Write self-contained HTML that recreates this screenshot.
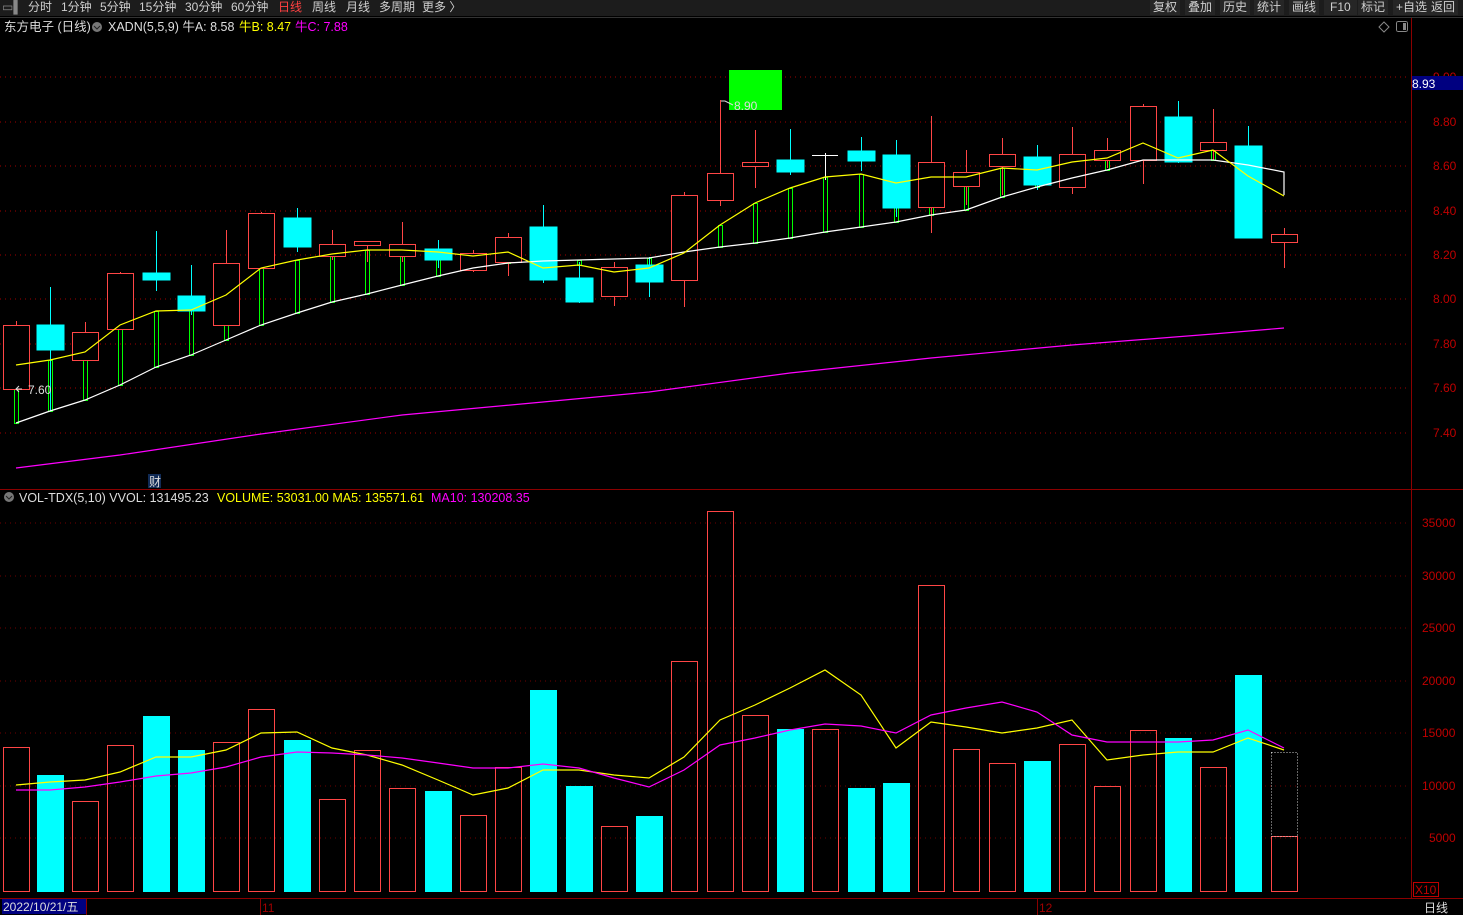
<!DOCTYPE html>
<html><head><meta charset="utf-8"><style>
html,body{margin:0;padding:0;background:#000;width:1463px;height:915px;overflow:hidden;font-family:"Liberation Sans","Noto Sans CJK SC",sans-serif}
.top{position:absolute;left:0;top:0;width:1463px;height:16px;background:#1c1c1c;font-size:12px;color:#cfcfcf;line-height:15px}
.top span{position:absolute;top:0}
.btn{background:#262626;padding:0 3px}
svg rect, svg line{shape-rendering:crispEdges}
</style></head><body>
<div class="top">
<span style="left:2px;color:#888">▭▌</span>
<span style="left:28px">分时</span><span style="left:61px">1分钟</span><span style="left:100px">5分钟</span><span style="left:139px">15分钟</span><span style="left:185px">30分钟</span><span style="left:231px">60分钟</span><span style="left:278px;color:#ff4040">日线</span><span style="left:312px">周线</span><span style="left:346px">月线</span><span style="left:379px">多周期</span><span style="left:422px">更多 〉</span>
<span class="btn" style="left:1150px">复权</span><span class="btn" style="left:1185px">叠加</span><span class="btn" style="left:1220px">历史</span><span class="btn" style="left:1254px">统计</span><span class="btn" style="left:1289px">画线</span><span class="btn" style="left:1324px;padding:0 6px">F10</span><span class="btn" style="left:1358px">标记</span><span class="btn" style="left:1393px">+自选</span><span class="btn" style="left:1428px">返回</span>
</div>
<svg width="1463" height="915" style="position:absolute;left:0;top:0" xmlns="http://www.w3.org/2000/svg">
<g font-family="Liberation Sans, Noto Sans CJK SC, sans-serif" font-size="12">
<line x1="0" y1="17.5" x2="1463" y2="17.5" stroke="#333"/>
<text x="4" y="31" fill="#ddd" font-size="12.5">东方电子 (日线)</text>
<circle cx="97" cy="27" r="5" fill="#777"/><path d="M94 26l3 3 3-3" stroke="#222" fill="none"/>
<text x="108" y="31" fill="#ddd" font-size="12.5">XADN(5,5,9)  牛A: 8.58</text>
<text x="239" y="31" fill="#ffff00" font-size="12.5">牛B: 8.47</text>
<text x="295" y="31" fill="#ff00ff" font-size="12.5">牛C: 7.88</text>
<path d="M1384 22l5 5-5 5-5-5z" stroke="#888" fill="none"/>
<rect x="1396.5" y="21.5" width="11" height="10" rx="2" stroke="#888" fill="none"/><rect x="1403" y="23" width="3" height="7" fill="#888"/>
<g stroke="#a00000" stroke-dasharray="1,4">
<line x1="0" y1="77" x2="1410" y2="77"/><line x1="0" y1="122" x2="1410" y2="122"/><line x1="0" y1="166" x2="1410" y2="166"/><line x1="0" y1="211" x2="1410" y2="211"/><line x1="0" y1="255" x2="1410" y2="255"/><line x1="0" y1="299" x2="1410" y2="299"/><line x1="0" y1="344" x2="1410" y2="344"/><line x1="0" y1="388" x2="1410" y2="388"/><line x1="0" y1="433" x2="1410" y2="433"/>
</g>
<g fill="#c00000" font-size="12">
<text x="1433" y="81">9.00</text><text x="1433" y="126">8.80</text><text x="1433" y="170">8.60</text><text x="1433" y="215">8.40</text><text x="1433" y="259">8.20</text><text x="1433" y="303">8.00</text><text x="1433" y="348">7.80</text><text x="1433" y="392">7.60</text><text x="1433" y="437">7.40</text>
</g>
<rect x="1411" y="76" width="52" height="14" fill="#000080"/>
<text x="1412" y="88" fill="#fff">8.93</text>
<line x1="1411.5" y1="18" x2="1411.5" y2="898" stroke="#8b0000"/>
<line x1="0" y1="489.5" x2="1463" y2="489.5" stroke="#8b0000"/>
<line x1="0" y1="898.5" x2="1463" y2="898.5" stroke="#8b0000"/>
<polyline fill="none" stroke="#ff00ff" stroke-width="1.2" points="16,468 120,455 261,434 402,415 543,402 649,392 790,373 931,358 1072,345 1213,334 1284,328"/>
<g fill="none" stroke="#00ff00" stroke-width="1">
<rect x="14.5" y="365.5" width="4" height="58"/><rect x="48.5" y="360.5" width="4" height="51"/><rect x="83.5" y="352.5" width="4" height="48"/><rect x="118.5" y="325.5" width="4" height="60"/><rect x="154.5" y="311.5" width="4" height="56"/><rect x="189.5" y="310.5" width="4" height="45"/><rect x="224.5" y="295.5" width="4" height="45"/><rect x="259.5" y="268.5" width="4" height="57"/><rect x="295.5" y="260.5" width="4" height="53"/><rect x="330.5" y="254.5" width="4" height="48"/><rect x="365.5" y="250.5" width="4" height="44"/><rect x="400.5" y="250.5" width="4" height="35"/><rect x="436.5" y="252.5" width="4" height="24"/><rect x="471.5" y="256.5" width="4" height="12"/><rect x="506.5" y="252.5" width="4" height="11"/><rect x="577.5" y="260.5" width="4" height="5"/><rect x="647.5" y="258.5" width="4" height="10"/><rect x="718.5" y="225.5" width="4" height="22"/><rect x="753.5" y="203.5" width="4" height="40"/><rect x="788.5" y="188.5" width="4" height="50"/><rect x="823.5" y="177.5" width="4" height="55"/><rect x="859.5" y="174.5" width="4" height="53"/><rect x="894.5" y="183.5" width="4" height="39"/><rect x="929.5" y="177.5" width="4" height="38"/><rect x="964.5" y="177.5" width="4" height="33"/><rect x="1000.5" y="168.5" width="4" height="29"/><rect x="1035.5" y="170.5" width="4" height="17"/><rect x="1070.5" y="162.5" width="4" height="16"/><rect x="1105.5" y="158.5" width="4" height="12"/><rect x="1141.5" y="143.5" width="4" height="17"/><rect x="1211.5" y="150.5" width="4" height="10"/>
</g>
<g stroke-width="1">
<g stroke="#ff4646" fill="#000">
<line x1="16.5" y1="321" x2="16.5" y2="389"/><rect x="3.5" y="325.5" width="26" height="64"/>
<line x1="85.5" y1="322" x2="85.5" y2="360"/><rect x="72.5" y="332.5" width="26" height="28"/>
<line x1="120.5" y1="272" x2="120.5" y2="329"/><rect x="107.5" y="273.5" width="26" height="56"/>
<line x1="226.5" y1="230" x2="226.5" y2="325"/><rect x="213.5" y="263.5" width="26" height="62"/>
<line x1="261.5" y1="212" x2="261.5" y2="268"/><rect x="248.5" y="213.5" width="26" height="55"/>
<line x1="332.5" y1="230" x2="332.5" y2="260"/><rect x="319.5" y="244.5" width="26" height="12"/>
<line x1="367.5" y1="241" x2="367.5" y2="262"/><rect x="354.5" y="241.5" width="26" height="4"/>
<line x1="402.5" y1="222" x2="402.5" y2="262"/><rect x="389.5" y="244.5" width="26" height="12"/>
<line x1="473.5" y1="250" x2="473.5" y2="272"/><rect x="460.5" y="253.5" width="26" height="17"/>
<line x1="508.5" y1="233" x2="508.5" y2="276"/><rect x="495.5" y="237.5" width="26" height="25"/>
<line x1="614.5" y1="262" x2="614.5" y2="306"/><rect x="601.5" y="267.5" width="26" height="29"/>
<line x1="684.5" y1="192" x2="684.5" y2="307"/><rect x="671.5" y="195.5" width="26" height="85"/>
<line x1="720.5" y1="100" x2="720.5" y2="206"/><rect x="707.5" y="173.5" width="26" height="27"/>
<line x1="755.5" y1="130" x2="755.5" y2="188"/><rect x="742.5" y="162.5" width="26" height="4"/>
<line x1="931.5" y1="116" x2="931.5" y2="233"/><rect x="918.5" y="162.5" width="26" height="45"/>
<line x1="966.5" y1="150" x2="966.5" y2="205"/><rect x="953.5" y="172.5" width="26" height="14"/>
<line x1="1002.5" y1="138" x2="1002.5" y2="195"/><rect x="989.5" y="154.5" width="26" height="12"/>
<line x1="1072.5" y1="127" x2="1072.5" y2="194"/><rect x="1059.5" y="154.5" width="26" height="33"/>
<line x1="1107.5" y1="138" x2="1107.5" y2="168"/><rect x="1094.5" y="150.5" width="26" height="10"/>
<line x1="1143.5" y1="104" x2="1143.5" y2="184"/><rect x="1130.5" y="106.5" width="26" height="54"/>
<line x1="1213.5" y1="109" x2="1213.5" y2="160"/><rect x="1200.5" y="142.5" width="26" height="8"/>
<line x1="1284.5" y1="228" x2="1284.5" y2="268"/><rect x="1271.5" y="234.5" width="26" height="8"/>
</g>
<g stroke="#00ffff" fill="#00ffff">
<line x1="50.5" y1="287" x2="50.5" y2="411"/><rect x="37" y="325" width="27" height="25"/>
<line x1="156.5" y1="231" x2="156.5" y2="291"/><rect x="143" y="273" width="27" height="7"/>
<line x1="191.5" y1="265" x2="191.5" y2="315"/><rect x="178" y="296" width="27" height="15"/>
<line x1="297.5" y1="208" x2="297.5" y2="252"/><rect x="284" y="218" width="27" height="29"/>
<line x1="438.5" y1="240" x2="438.5" y2="268"/><rect x="425" y="249" width="27" height="11"/>
<line x1="543.5" y1="205" x2="543.5" y2="283"/><rect x="530" y="227" width="27" height="53"/>
<line x1="579.5" y1="262" x2="579.5" y2="303"/><rect x="566" y="278" width="27" height="24"/>
<line x1="649.5" y1="257" x2="649.5" y2="297"/><rect x="636" y="265" width="27" height="17"/>
<line x1="790.5" y1="129" x2="790.5" y2="175"/><rect x="777" y="160" width="27" height="12"/>
<line x1="861.5" y1="137" x2="861.5" y2="171"/><rect x="848" y="151" width="27" height="10"/>
<line x1="896.5" y1="140" x2="896.5" y2="217"/><rect x="883" y="155" width="27" height="53"/>
<line x1="1037.5" y1="145" x2="1037.5" y2="190"/><rect x="1024" y="157" width="27" height="28"/>
<line x1="1178.5" y1="101" x2="1178.5" y2="163"/><rect x="1165" y="117" width="27" height="45"/>
<line x1="1248.5" y1="126" x2="1248.5" y2="237"/><rect x="1235" y="146" width="27" height="92"/>
</g>
<g stroke="#fff"><line x1="825.5" y1="153" x2="825.5" y2="180"/><line x1="812" y1="155.5" x2="838" y2="155.5"/></g>
</g>
<polyline fill="none" stroke="#fff" stroke-width="1.2" points="16,423 50,411 85,400 120,385 156,367 191,355 226,340 261,325 297,313 332,302 367,294 402,285 438,276 473,268 508,263 543,261 579,260 614,259 649,258 684,252 720,247 755,243 790,238 825,232 861,227 896,222 931,215 966,210 1002,197 1037,187 1072,178 1107,170 1143,160 1178,160 1213,160 1248,165 1284,172 1284,195"/>
<polyline fill="none" stroke="#ffff00" stroke-width="1.2" points="16,365 50,360 85,352 120,325 156,311 191,310 226,295 261,268 297,260 332,254 367,250 402,250 438,252 473,256 508,252 543,268 579,265 614,272 649,268 684,253 720,225 755,203 790,188 825,177 861,174 896,183 931,177 966,177 1002,168 1037,170 1072,162 1107,158 1143,143 1178,158 1213,150 1248,176 1284,196"/>
<rect x="729" y="70" width="53" height="40" fill="#00ff00"/>
<path d="M721 101h4l8 4" stroke="#ddd" fill="none"/>
<text x="734" y="110" fill="#ddd">8.90</text>
<path d="M22 389h-6m3-3l-3 3 3 3" stroke="#ddd" fill="none"/>
<text x="28" y="394" fill="#ddd">7.60</text>
<rect x="148" y="474" width="13" height="14" fill="#102a55"/>
<text x="149" y="486" fill="#ddd">财</text>
<circle cx="9" cy="497" r="5" fill="#777"/><path d="M6 496l3 3 3-3" stroke="#222" fill="none"/>
<text x="19" y="502" fill="#ddd" font-size="12.5">VOL-TDX(5,10)  VVOL: 131495.23</text>
<text x="217" y="502" fill="#ffff00" font-size="12.5">VOLUME: 53031.00  MA5: 135571.61</text>
<text x="431" y="502" fill="#ff00ff" font-size="12.5">MA10: 130208.35</text>
<g stroke="#700000" stroke-dasharray="1,4">
<line x1="0" y1="523" x2="1410" y2="523"/><line x1="0" y1="576" x2="1410" y2="576"/><line x1="0" y1="628" x2="1410" y2="628"/><line x1="0" y1="681" x2="1410" y2="681"/><line x1="0" y1="733" x2="1410" y2="733"/><line x1="0" y1="786" x2="1410" y2="786"/><line x1="0" y1="838" x2="1410" y2="838"/>
</g>
<g fill="#c00000"><text x="1422" y="527">35000</text><text x="1422" y="580">30000</text><text x="1422" y="632">25000</text><text x="1422" y="685">20000</text><text x="1422" y="737">15000</text><text x="1422" y="790">10000</text><text x="1429" y="842">5000</text></g>
<rect x="1413.5" y="882.5" width="25" height="14" fill="none" stroke="#c00000"/>
<text x="1415" y="894" fill="#c00000">X10</text>
<g stroke="#ff4646" fill="none" stroke-width="1">
<rect x="3.5" y="747.5" width="26" height="144"/><rect x="72.5" y="801.5" width="26" height="90"/><rect x="107.5" y="745.5" width="26" height="146"/><rect x="213.5" y="742.5" width="26" height="149"/><rect x="248.5" y="709.5" width="26" height="182"/><rect x="319.5" y="799.5" width="26" height="92"/><rect x="354.5" y="750.5" width="26" height="141"/><rect x="389.5" y="788.5" width="26" height="103"/><rect x="460.5" y="815.5" width="26" height="76"/><rect x="495.5" y="767.5" width="26" height="124"/><rect x="601.5" y="826.5" width="26" height="65"/><rect x="671.5" y="661.5" width="26" height="230"/><rect x="707.5" y="511.5" width="26" height="380"/><rect x="742.5" y="715.5" width="26" height="176"/><rect x="918.5" y="585.5" width="26" height="306"/><rect x="953.5" y="749.5" width="26" height="142"/><rect x="989.5" y="763.5" width="26" height="128"/><rect x="1059.5" y="744.5" width="26" height="147"/><rect x="1094.5" y="786.5" width="26" height="105"/><rect x="1130.5" y="730.5" width="26" height="161"/><rect x="1200.5" y="767.5" width="26" height="124"/><rect x="1271.5" y="836.5" width="26" height="55"/><rect x="812.5" y="729.5" width="26" height="162"/>
</g>
<rect x="1271.5" y="752.5" width="26" height="84" fill="none" stroke="#ccc" stroke-dasharray="1,2"/>
<g fill="#00ffff">
<rect x="37" y="775" width="27" height="117"/><rect x="143" y="716" width="27" height="176"/><rect x="178" y="750" width="27" height="142"/><rect x="284" y="740" width="27" height="152"/><rect x="425" y="791" width="27" height="101"/><rect x="530" y="690" width="27" height="202"/><rect x="566" y="786" width="27" height="106"/><rect x="636" y="816" width="27" height="76"/><rect x="777" y="729" width="27" height="163"/><rect x="848" y="788" width="27" height="104"/><rect x="883" y="783" width="27" height="109"/><rect x="1024" y="761" width="27" height="131"/><rect x="1165" y="738" width="27" height="154"/><rect x="1235" y="675" width="27" height="217"/>
</g>
<polyline fill="none" stroke="#ffff00" stroke-width="1.2" points="16,785 50,782 85,780 120,772 156,757 191,757 226,750 261,733 297,732 332,748 367,755 402,765 438,780 473,795 508,788 543,770 579,770 614,775 649,778 684,757 720,720 755,705 790,688 825,670 861,695 896,748 931,722 966,727 1002,733 1037,728 1072,720 1107,760 1143,755 1178,752 1213,752 1248,738 1284,750"/>
<polyline fill="none" stroke="#ff00ff" stroke-width="1.2" points="16,790 50,790 85,787 120,782 156,776 191,773 226,767 261,757 297,752 332,753 367,755 402,758 438,763 473,768 508,768 543,764 579,768 614,778 649,787 684,770 720,745 755,738 790,730 825,724 861,726 896,733 931,715 966,708 1002,702 1037,712 1072,735 1107,742 1143,742 1178,742 1213,740 1248,730 1284,748"/>
<rect x="2" y="899" width="85" height="15" fill="#000080"/>
<text x="3" y="911" fill="#ddd">2022/10/21/五</text>
<line x1="86.5" y1="899" x2="86.5" y2="915" stroke="#8b0000"/>
<line x1="260.5" y1="899" x2="260.5" y2="915" stroke="#8b0000"/>
<text x="262" y="912" fill="#a00000">11</text>
<line x1="1037.5" y1="899" x2="1037.5" y2="915" stroke="#8b0000"/>
<text x="1039" y="912" fill="#a00000">12</text>
<text x="1424" y="912" fill="#ddd">日线</text>
</g>
</svg>
</body></html>
